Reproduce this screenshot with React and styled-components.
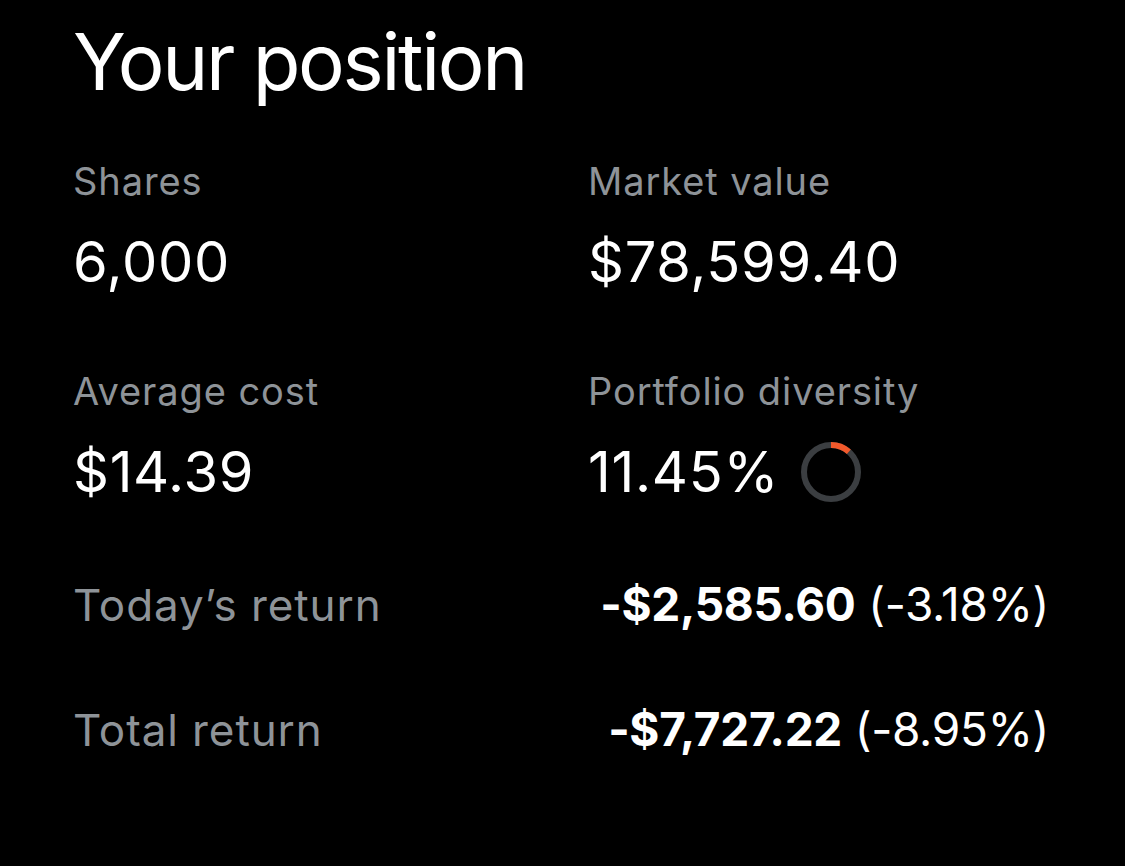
import React from "react";
import styled, { createGlobalStyle } from "styled-components";

const GlobalStyle = createGlobalStyle`
  html, body {
    margin: 0;
    padding: 0;
    background: #000;
  }
  body {
    font-family: Inter, "Noto Sans", "Liberation Sans", sans-serif;
    color: #fff;
    -webkit-font-smoothing: antialiased;
  }
`;

export default function App() {
  const stats = [
    { label: "Shares", value: "6,000" },
    { label: "Market value", value: "$78,599.40" },
    { label: "Average cost", value: "$14.39" },
    { label: "Portfolio diversity", value: "11.45%", ring: 11.45 },
  ];

  const returns = [
    { label: "Today\u2019s return", amount: "-$2,585.60", pct: "(-3.18%)" },
    { label: "Total return", amount: "-$7,727.22", pct: "(-8.95%)" },
  ];

  return (
    <>
      <GlobalStyle />
      <Page>
        <Title>Your position</Title>
        <Grid>
          {stats.map((s) => (
            <Stat key={s.label}>
              <Label>{s.label}</Label>
              <ValueRow>
                <Value>{s.value}</Value>
                {s.ring && <Ring percent={s.ring} />}
              </ValueRow>
            </Stat>
          ))}
        </Grid>
        <Returns>
          {returns.map((r) => (
            <ReturnRow key={r.label}>
              <ReturnLabel>{r.label}</ReturnLabel>
              <ReturnValue>
                <b>{r.amount}</b> {r.pct}
              </ReturnValue>
            </ReturnRow>
          ))}
        </Returns>
      </Page>
    </>
  );
}

function Ring({ percent }) {
  const r = 27;
  const c = 2 * Math.PI * r;
  const arc = (c * percent) / 100;
  return (
    <RingSvg width="60" height="60" viewBox="0 0 60 60">
      <circle cx="30" cy="30" r={r} fill="none" stroke="#3b3e41" strokeWidth="6" />
      <circle
        cx="30"
        cy="30"
        r={r}
        fill="none"
        stroke="#f2592b"
        strokeWidth="6"
        strokeDasharray={`${arc} ${c}`}
        transform="rotate(-90 30 30)"
      />
    </RingSvg>
  );
}

const Page = styled.div`
  padding: 14px 76px 80px 73px;
`;
const Title = styled.h1`
  margin: 0;
  font-size: 78px;
  line-height: 96px;
  font-weight: 400;
  letter-spacing: -2.3px;
`;
const Grid = styled.div`
  display: grid;
  grid-template-columns: 515px 1fr;
  row-gap: 73px;
  margin-top: 47px;
`;
const Stat = styled.div`
  display: flex;
  flex-direction: column;
  gap: 25px;
`;
const Label = styled.div`
  font-size: 38px;
  line-height: 48px;
  color: #8e9398;
  letter-spacing: 0.9px;
`;
const ValueRow = styled.div`
  display: flex;
  align-items: center;
  gap: 22px;
`;
const Value = styled.div`
  font-size: 56px;
  line-height: 64px;
  letter-spacing: 0.7px;
`;
const RingSvg = styled.svg`
  display: block;
  flex-shrink: 0;
`;
const Returns = styled.div`
  display: flex;
  flex-direction: column;
  gap: 64px;
  margin-top: 70px;
`;
const ReturnRow = styled.div`
  display: flex;
  justify-content: space-between;
  align-items: baseline;
  line-height: 60px;
`;
const ReturnLabel = styled.div`
  font-size: 44px;
  color: #8e9398;
  letter-spacing: 0.9px;
`;
const ReturnValue = styled.div`
  font-size: 46px;
  letter-spacing: -0.3px;
  b {
    font-weight: 700;
  }
`;
